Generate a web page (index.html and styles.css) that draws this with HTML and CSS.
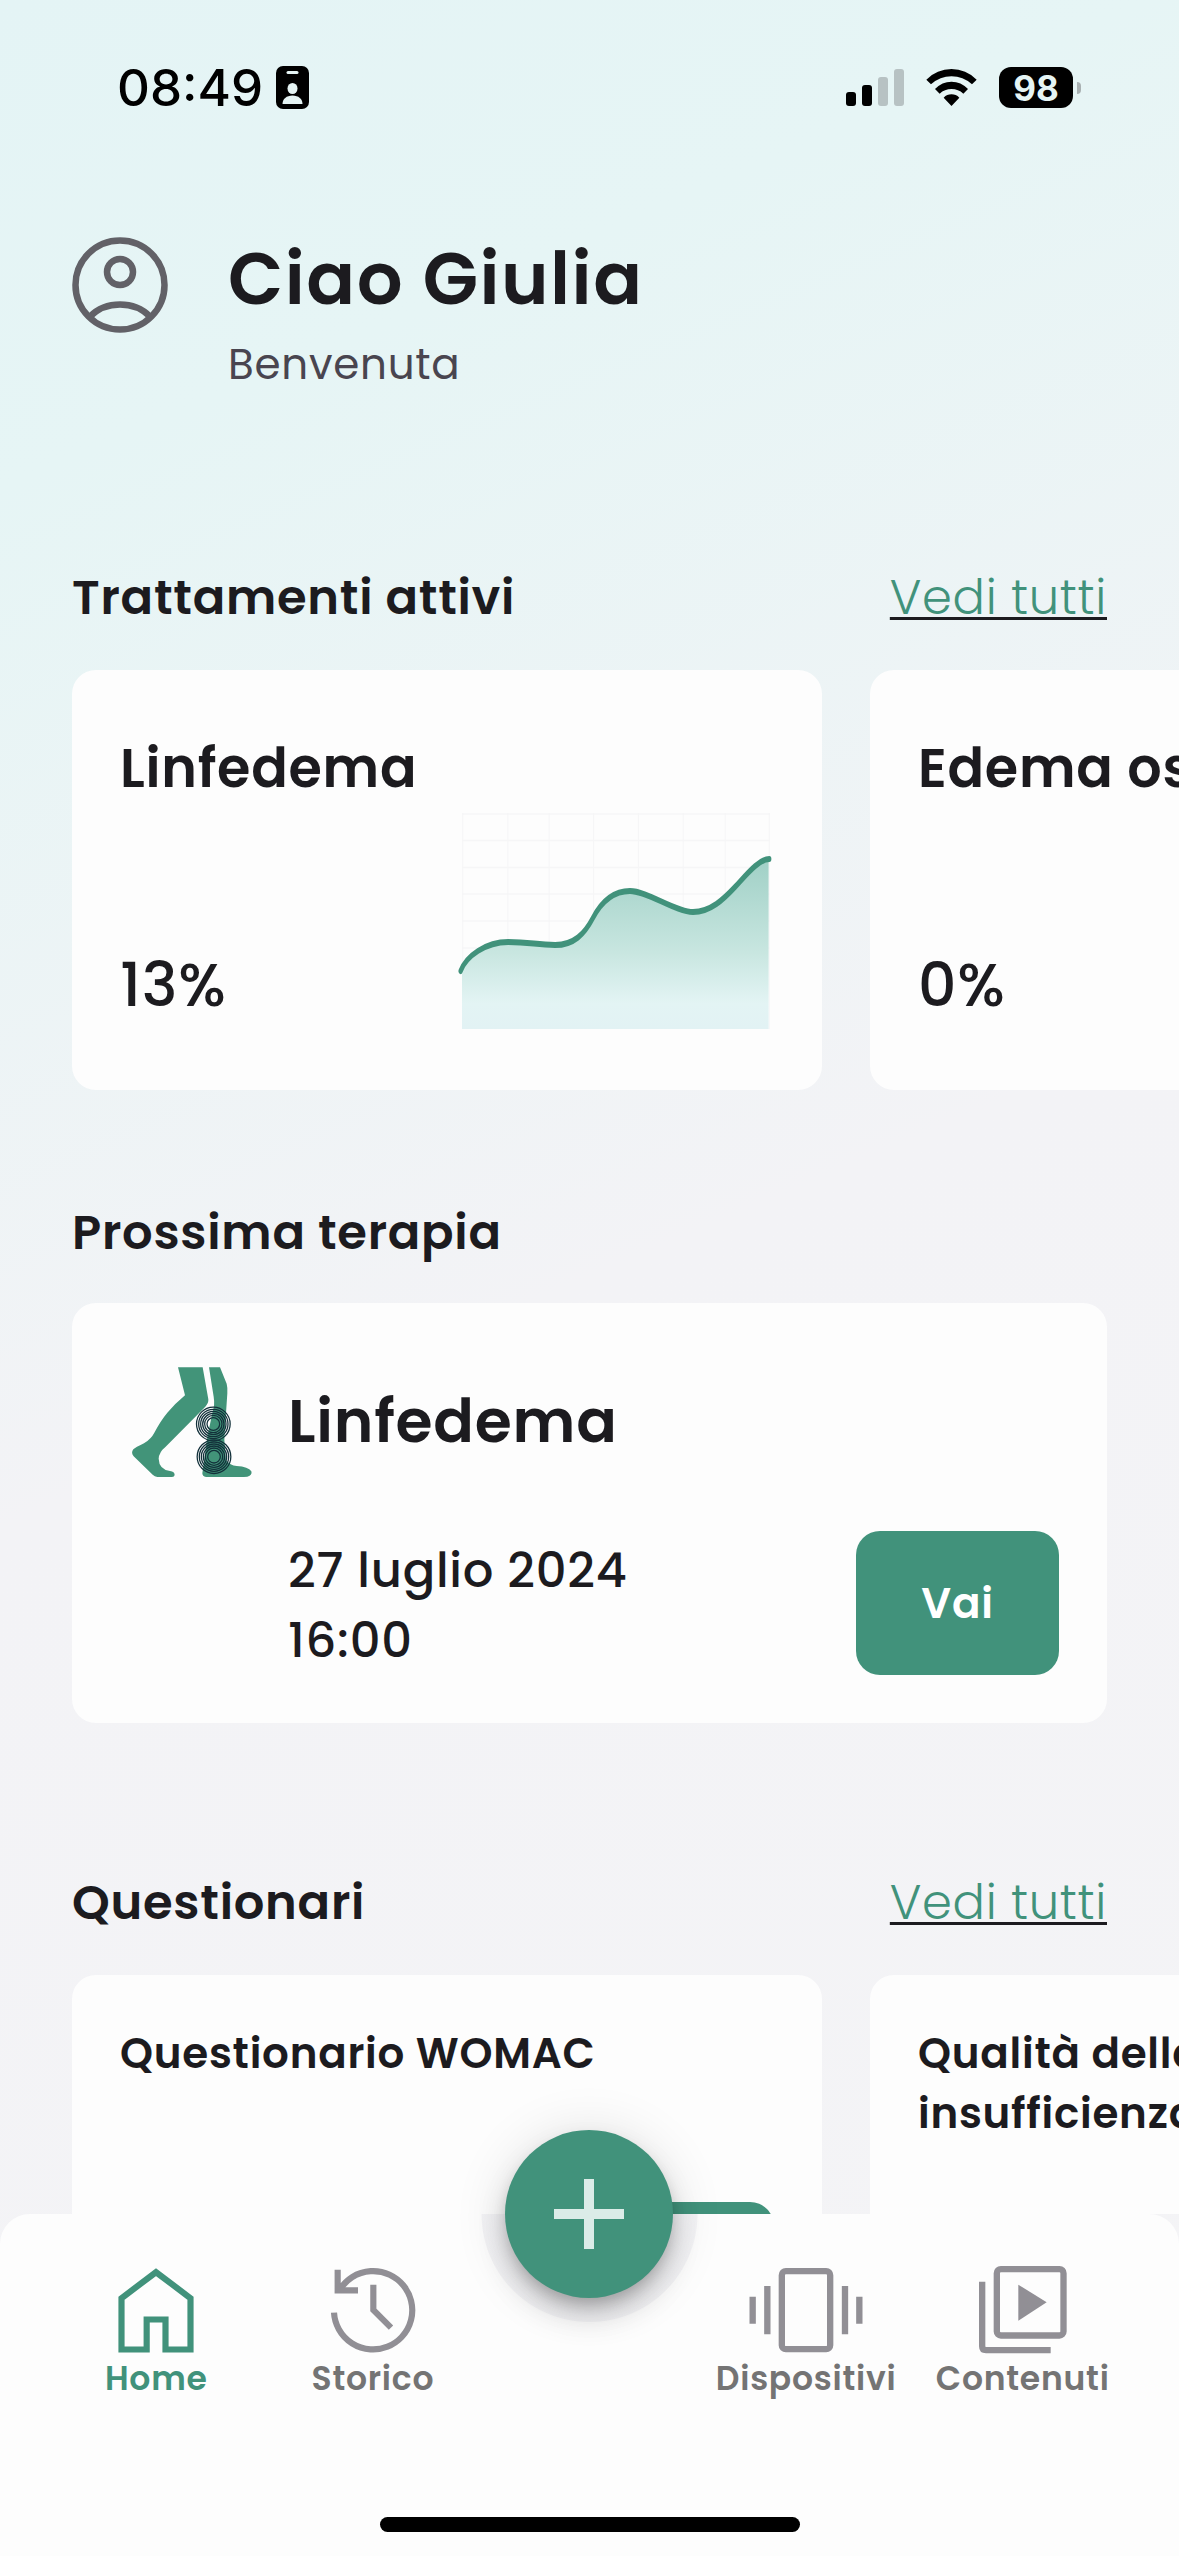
FILE: index.html
```html
<!DOCTYPE html>
<html lang="it">
<head>
<meta charset="utf-8">
<title>Home</title>
<link rel="stylesheet" href="styles.css">
</head>
<body>
<div class="screen">
  <main class="content">
    <div class="status">
      <div class="status-left">
        <span class="time">08:49</span>
        <svg class="id-badge" width="33" height="43" viewBox="0 0 33 43"><rect width="33" height="43" rx="7"/><rect x="10.500" y="5" width="12" height="3" rx="1.500" fill="#e5f4f4"/><ellipse cx="16.500" cy="22.500" rx="5" ry="5.500" fill="#e5f4f4"/><path d="M6.500 38c0-5 4-8.500 10-8.500s10 3.500 10 8.500z" fill="#e5f4f4"/></svg>
      </div>
      <div class="status-right">
        <svg width="58" height="37" viewBox="138 87 174 111"><rect x="138" y="156" width="30" height="42" rx="9"/><rect x="186" y="135" width="30" height="63" rx="9"/><g fill="#b7c2c3"><rect x="234" y="111" width="30" height="87" rx="9"/><rect x="282" y="87" width="30" height="111" rx="9"/></g></svg>
        <svg class="wifi" width="51" height="37" viewBox="378 87 153 111"><path d="M379 119Q411 87 454.500 87T530 119L516 133Q489 109 454.500 109T393 133ZM405 147Q426 125 454.500 125T504 147L490 161Q475 147 454.500 147T419 161ZM431 173Q441 163 454.500 163T478 173L454.500 198Z"/></svg>
        <div class="battery"><span class="level">98</span></div><i class="nub"></i>
      </div>
    </div>

    <header class="hello">
      <svg class="avatar" width="96" height="96" viewBox="0 0 96 96" fill="none" stroke="#626167" stroke-width="6.500"><circle cx="48" cy="48" r="44.500"/><circle cx="48" cy="35" r="13"/><path d="M18 79.500C34 63.500 62 63.500 78 79.500"/></svg>
      <div>
        <h1 class="title">Ciao Giulia</h1>
        <p class="welcome">Benvenuta</p>
      </div>
    </header>

    <section class="section treatments">
      <div class="head"><h2 class="h2">Trattamenti attivi</h2><a class="more">Vedi tutti</a></div>
      <div class="row">
        <article class="card small">
          <div class="info"><h3 class="name">Linfedema</h3><div class="pct">13%</div></div>
          <svg class="chart" width="308" height="216" viewBox="0 0 440 216" preserveAspectRatio="none">
            <defs><linearGradient id="area" x1="0" y1="46" x2="0" y2="216" gradientUnits="userSpaceOnUse"><stop offset="0" stop-color="#a0d0c6"/><stop offset=".55" stop-color="#c8e6e0"/><stop offset=".85" stop-color="#e3f4f4"/><stop offset="1" stop-color="#e2f2f4"/></linearGradient></defs>
            <path d="M1 0V216M65.500 0V216M124.500 0V216M188 0V216M252 0V216M316 0V216M376 0V216M439 0V216M0 1H440M0 27.500H440M0 54.500H440M0 81H440M0 108H440M0 135H440" stroke="#f6f6f7" stroke-width="1.600" fill="none"/>
            <path d="M0 216V158C6 143 34 129 66 129S106 132 133 132S175 121 187 105S215 78 240 78S305 99 330 99S374 86 390 74S424 46 438 46V216Z" fill="url(#area)"/>
            <path d="M-2 158C6 143 34 129 66 129S106 132 133 132S175 121 187 105S215 78 240 78S305 99 330 99S374 86 390 74S424 46 439 46" fill="none" stroke="#41927b" stroke-width="6" stroke-linecap="round"/>
          </svg>
        </article>
        <article class="card small"><div class="info"><h3 class="name">Edema osseo</h3><div class="pct">0%</div></div></article>
      </div>
    </section>

    <section class="section next">
      <div class="head"><h2 class="h2">Prossima terapia</h2></div>
      <article class="card therapy">
        <svg class="legs" width="150" height="144" viewBox="0 3 450 432">
          <g fill="#429479"><path d="M174 52H248L265 148Q266 160 256 170L137 290Q117 306 116 326Q117 358 150 363Q164 365 164 375Q163 381 156 381H112Q104 380 98 374L41 319Q32 308 40 298Q46 292 72 280Q94 266 103 248Q122 212 142 188Q164 162 195 136Z"/><path d="M267 52H300L320 101Q323 112 322 130L318 190L313 270L318 330Q330 347 350 348Q385 350 394 364Q398 376 382 380Q374 381 356 381H258Q247 379 247 370L262 260L278 185Q285 166 281 140Z"/></g>
          <g fill="none" stroke="#12303a" stroke-width="3.800"><g id="rings"><circle cx="280" cy="222" r="19"/><circle cx="280" cy="222" r="26"/><circle cx="280" cy="222" r="32"/><circle cx="280" cy="222" r="38"/><circle cx="280" cy="222" r="44"/><circle cx="280" cy="222" r="50.500"/></g><use href="#rings" x="2" y="98"/></g>
        </svg>
        <h3 class="therapy-name">Linfedema</h3>
        <div class="when"><div>27 luglio 2024</div><div>16:00</div></div>
        <button class="go">Vai</button>
      </article>
    </section>

    <section class="section surveys">
      <div class="head"><h2 class="h2">Questionari</h2><a class="more">Vedi tutti</a></div>
      <div class="row">
        <article class="card survey"><h3 class="survey-name">Questionario WOMAC</h3><div class="survey-go"></div></article>
        <article class="card survey"><h3 class="survey-name">Qualità della vita<br>insufficienza venosa</h3></article>
      </div>
    </section>
  </main>

  <nav class="nav">
    <div class="tab active">
      <svg width="76" height="90" viewBox="175 79 228 270" fill="none" stroke="currentColor" stroke-width="18.500"><path d="M185.500 329.500V175.500L289 97.500L392.500 175.500V329.500H317.500V239.500H261V329.500Z"/></svg>
      <span>Home</span>
    </div>
    <div class="tab">
      <svg width="86" height="90" viewBox="809 79 258 270" fill="none" stroke="currentColor" stroke-width="18.500"><path d="M821 219A117.500 117.500 0 1 0 839 149M832 90V152H893M939 135V211L992 264"/></svg>
      <span>Storico</span>
    </div>
    <div class="fab"><svg width="70" height="70" viewBox="0 0 70 70" stroke="#dbece8" stroke-width="10"><path d="M35 0V70M0 35H70"/></svg></div>
    <div class="tab">
      <svg width="114" height="90" viewBox="177 79 342 270" fill="none" stroke="currentColor" stroke-width="19"><rect x="275.500" y="94.500" width="145" height="234" rx="12"/><path d="M188 171V252M232 139V284M465 139V284M508 171V252"/></svg>
      <span>Dispositivi</span>
    </div>
    <div class="tab">
      <svg width="88" height="90" viewBox="867 79 264 270" fill="none" stroke="currentColor" stroke-width="19"><rect x="920.500" y="88.500" width="200" height="199" rx="12"/><path d="M876.500 126V320Q876.500 331.500 888 331.500H1082"/><path d="M985 135L1070 188L985 243Z" fill="currentColor" stroke="none"/></svg>
      <span>Contenuti</span>
    </div>
  </nav>
  <div class="home-bar"></div>
</div>
</body>
</html>
```
FILE: styles.css
```css
* { box-sizing: border-box; margin: 0; padding: 0; }
body { font-family: Poppins, Inter, sans-serif; letter-spacing: .75px; color: #1c1b1f; }
svg { display: block; overflow: visible; }
.screen { width: 1179px; height: 2556px; overflow: hidden; position: relative; background: linear-gradient(157deg, #e4f4f5 0%, #e6f5f5 16%, #f3f3f6 50%, #f4f4f6 100%); }
.content { height: 2214px; overflow: hidden; }
.status { height: 175px; display: flex; justify-content: space-between; padding: 0 98px 0 117px; font-family: Inter, sans-serif; letter-spacing: 0; }
.status-left, .status-right { display: flex; align-items: center; }
.time { font-size: 51px; font-weight: 500; line-height: 60px; width: 159px; color: #000; }
.status-right svg { margin-right: 22px; }
.battery { width: 74px; height: 41px; border-radius: 12px; background: #000; display: flex; align-items: center; justify-content: center; }
.level { font-size: 35px; font-weight: 700; line-height: 40px; color: #e5f4f4; }
.nub { width: 4px; height: 12px; margin-left: 4px; border-radius: 0 4px 4px 0; background: #a9b1b2; }
.hello { display: flex; gap: 60px; padding: 61px 72px 0; height: 221px; }
.avatar { margin-top: 1px; }
.title { font-size: 72px; line-height: 86px; font-weight: 600; letter-spacing: 1.5px; }
.welcome { font-size: 42px; line-height: 63px; margin-top: 11px; font-weight: 400; color: #49454f; }
.treatments { padding-top: 166px; }
.next { padding-top: 107px; }
.surveys { padding-top: 144px; }
.head { display: flex; justify-content: space-between; align-items: center; height: 72px; padding: 0 72px; }
.h2 { font-size: 48px; line-height: 72px; font-weight: 600; white-space: nowrap; }
.more { font-size: 48px; line-height: 72px; font-weight: 300; letter-spacing: .65px; color: #41927b; text-decoration: underline #1c1b1f 2.5px; text-underline-offset: 3px; text-decoration-skip-ink: none; }
.row { display: flex; gap: 48px; padding-left: 72px; margin-top: 36px; }
.card { background: #fdfdfd; border-radius: 24px; }
.small { flex: none; width: 750px; height: 420px; padding: 58px 52px 61px 48px; display: flex; justify-content: space-between; align-items: flex-end; }
.info { height: 100%; display: flex; flex-direction: column; justify-content: space-between; }
.name { font-size: 54px; line-height: 80px; font-weight: 600; white-space: nowrap; }
.pct { font-size: 60px; line-height: 88px; font-weight: 500; }
.therapy { margin: 34px 72px 0; height: 420px; padding: 48px; display: grid; grid-template-columns: 168px 1fr 203px; grid-template-rows: 144px 144px; row-gap: 36px; }
.therapy-name { grid-column: 2 / 4; font-size: 60px; line-height: 141px; font-weight: 600; }
.when { grid-column: 2; padding-top: 5px; font-size: 48px; line-height: 69.5px; font-weight: 500; white-space: nowrap; }
.go { border: 0; border-radius: 24px; background: #41927b; color: #fff; font: inherit; font-size: 42px; font-weight: 600; letter-spacing: inherit; }
.survey { flex: none; width: 750px; height: 420px; padding: 49px 48px; display: flex; flex-direction: column; justify-content: space-between; align-items: flex-end; }
.survey-name { width: 100%; font-size: 42px; line-height: 60px; font-weight: 600; white-space: nowrap; }
.survey-go { width: 203px; height: 144px; border-radius: 24px; background: #41927b; }
.nav { height: 342px; padding: 52px 48px 0; display: grid; grid-template-columns: repeat(5, 1fr); align-items: start; border-radius: 30px 30px 0 0; background: radial-gradient(circle at 50% 0, transparent 107.5px, #fdfdfd 108.5px); }
.tab { display: flex; flex-direction: column; align-items: center; color: #918f95; }
.tab span { margin-top: 3px; font-size: 33px; line-height: 40px; font-weight: 600; color: #747474; white-space: nowrap; }
.active, .tab.active span { color: #41927b; }
.fab { justify-self: center; width: 168px; height: 168px; margin-top: -136px; border-radius: 50%; background: #41927b; display: flex; align-items: center; justify-content: center; box-shadow: 0 9px 15px -3px rgba(0,0,0,.2), 0 18px 30px rgba(0,0,0,.14), 0 3px 54px rgba(0,0,0,.12); }
.home-bar { position: absolute; left: 380px; bottom: 24px; width: 420px; height: 15px; border-radius: 8px; background: #000; }
```
